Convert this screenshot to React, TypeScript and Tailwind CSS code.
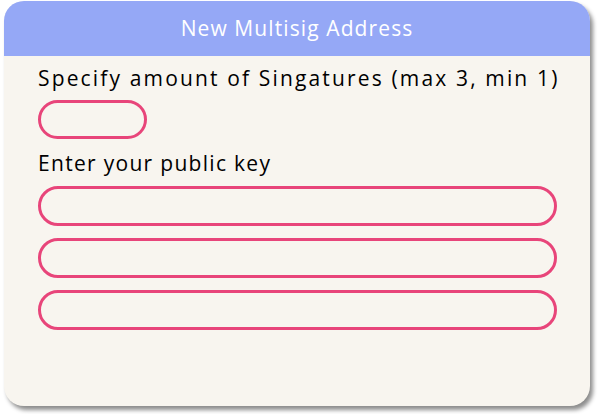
import React from "react";

export default function App() {
  const font = { fontFamily: '"Open Sans", "Noto Sans", sans-serif' };
  return (
    <div className="w-[598px] h-[414px] bg-white" style={font}>
      <div className="ml-[4px] mt-[1px] w-[586px] h-[405px] rounded-[20px] overflow-hidden bg-[#f8f5ef] shadow-[3px_4px_4px_rgba(0,0,0,0.45)] flex flex-col">
        <div className="h-[55px] bg-[#95a8f6] flex items-center justify-center text-white text-[21px] tracking-[1.1px]">
          New Multisig Address
        </div>
        <div className="px-[34px] pt-[8px] flex flex-col">
          <div className="text-[21px] leading-[28px] text-black tracking-[2.15px] whitespace-nowrap">
            Specify amount of Singatures (max 3, min 1)
          </div>
          <input className="mt-[8px] w-[109px] h-[39px] rounded-full border-[3px] border-[#e8457a] bg-transparent outline-none" />
          <div className="mt-[10px] text-[21px] leading-[28px] text-black tracking-[1.3px]">
            Enter your public key
          </div>
          <div className="mt-[9px] flex flex-col gap-[12px]">
            <input className="w-[519px] h-[40px] rounded-full border-[3px] border-[#e8457a] bg-transparent outline-none" />
            <input className="w-[519px] h-[40px] rounded-full border-[3px] border-[#e8457a] bg-transparent outline-none" />
            <input className="w-[519px] h-[40px] rounded-full border-[3px] border-[#e8457a] bg-transparent outline-none" />
          </div>
        </div>
      </div>
    </div>
  );
}
